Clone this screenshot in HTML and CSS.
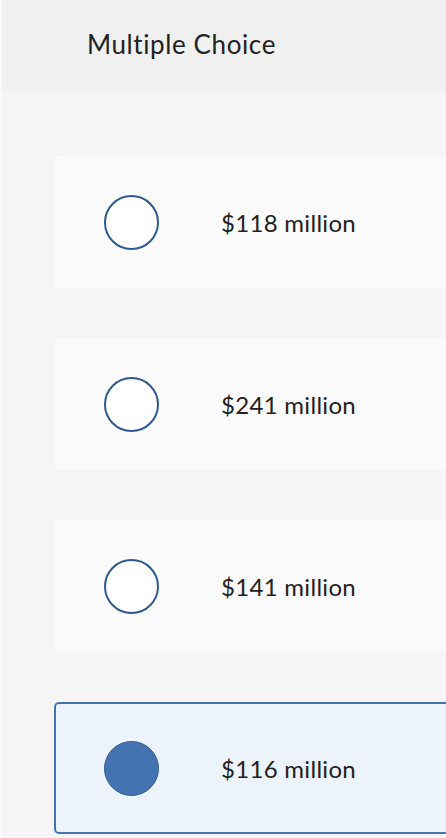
FILE: index.html
```html
<!DOCTYPE html>
<html lang="en">
<head>
    <meta charset="UTF-8">
    <meta name="viewport" content="width=device-width, initial-scale=1.0">
    <title>Multiple Choice</title>
    <link rel="stylesheet" href="styles.css">
</head>
<body>
    <header class="question-header">
        <h1>Multiple Choice</h1>
    </header>

    <section class="choices">
        <label class="choice">
            <span class="radio"></span>
            <span class="choice-text">$118 million</span>
        </label>
        <label class="choice">
            <span class="radio"></span>
            <span class="choice-text">$241 million</span>
        </label>
        <label class="choice">
            <span class="radio"></span>
            <span class="choice-text">$141 million</span>
        </label>
        <label class="choice selected">
            <span class="radio"></span>
            <span class="choice-text">$116 million</span>
        </label>
    </section>
</body>
</html>
```

FILE: styles.css
```css
:root {
    --primary-color: #4573b2;
    --radio-border: #2d5a8e;
    --background-color: #f5f5f5;
    --text-color: #222;
}

* {
    margin: 0;
    padding: 0;
    box-sizing: border-box;
    font-family: Lato, "Open Sans", sans-serif;
    font-variant-ligatures: none;
}

body {
    background-color: var(--background-color);
    color: var(--text-color);
    border-left: 2px solid #fafafa;
    overflow: hidden;
    height: 838px;
}

.question-header {
    height: 92px;
    background: #f0f0f0;
    padding-left: 85px;
    display: flex;
    align-items: center;
}

    .question-header h1 {
        font-size: 26px;
        font-weight: 400;
        letter-spacing: 0.6px;
        margin-top: -5px;
    }

.choices {
    display: flex;
    flex-direction: column;
    gap: 50px;
    padding-top: 64px;
    margin-left: 52px;
    margin-right: -30px;
}

.choice {
    height: 132px;
    background: #fafafa;
    border: 2px solid transparent;
    border-radius: 5px;
    display: flex;
    align-items: center;
    padding-left: 48px;
    cursor: pointer;
}

    .choice.selected {
        background: #ecf3fb;
        border-color: var(--primary-color);
    }

.radio {
    width: 55px;
    height: 55px;
    border-radius: 50%;
    border: 2px solid var(--radio-border);
    background: white;
    flex-shrink: 0;
}

    .choice.selected .radio {
        background: var(--primary-color);
        border-color: #2f5d94;
        border-width: 1.5px;
    }

.choice-text {
    margin-left: 62px;
    font-size: 24px;
    letter-spacing: 0.3px;
}
```
